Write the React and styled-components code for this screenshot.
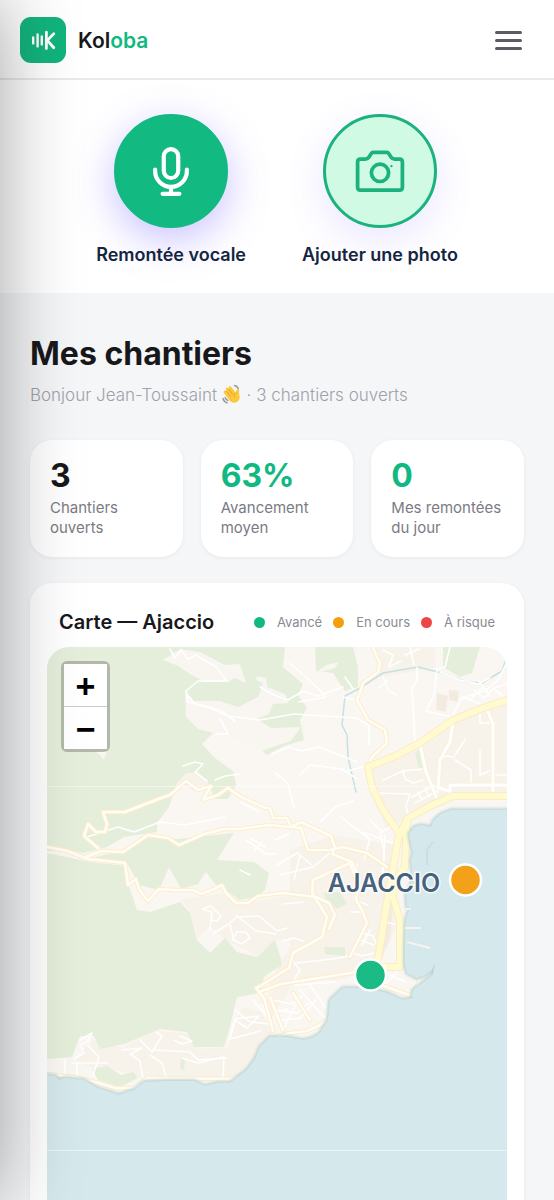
import React from "react";
import styled, { createGlobalStyle } from "styled-components";

const GlobalStyle = createGlobalStyle`
  * {
    box-sizing: border-box;
  }

  body {
    margin: 0;
    background: #f5f6f8;
    font-family: Inter, "Liberation Sans", sans-serif;
    color: #18181b;
  }
`;

const stats = [
  { value: "3", label: "Chantiers ouverts" },
  { value: "63%", label: "Avancement moyen", accent: true },
  { value: "0", label: "Mes remontées du jour", accent: true },
];

const legend = [
  { label: "Avancé", color: "#10b981" },
  { label: "En cours", color: "#f59e0b" },
  { label: "À risque", color: "#ef4444" },
];

const Logo = () => (
  <svg width="46" height="46" viewBox="0 0 46 46" aria-hidden="true">
    <rect width="46" height="46" rx="11" fill="#12b47d" />
    <g stroke="#fff" strokeLinecap="round" strokeWidth="2.4" fill="none">
      <path d="M13.2 20.4v6M17.6 17.4v12M21.8 19.4v8" />
      <path d="M26.4 15.2v16.4" strokeWidth="2.8" />
      <path d="M33.8 16.8l-6.6 6.600 6.600 7.400" strokeLinejoin="round" strokeWidth="2.8" />
    </g>
  </svg>
);

const MicIcon = () => (
  <svg width="56" height="56" viewBox="0 0 24 24" fill="none" stroke="#fff" strokeWidth="1.8" strokeLinecap="round" strokeLinejoin="round" aria-hidden="true">
    <rect x="8.900" y="2.600" width="6.200" height="12.400" rx="3.100" />
    <path d="M5.200 11.400v.6a6.800 6.800 0 0 0 13.600 0v-.6M12 18.800v3M8.400 21.800h7.200" />
  </svg>
);

const CameraIcon = () => (
  <svg width="56" height="56" viewBox="0 0 24 24" fill="none" stroke="#1bb27e" strokeWidth="1.6" strokeLinecap="round" strokeLinejoin="round" aria-hidden="true">
    <path d="M3.600 6.900h2.200c.6 0 1-.2 1.400-.8l1-1.500c.2-.4.6-.6 1-.6h5.600c.4 0 .8.2 1 .6l1 1.500c.4.6.8.8 1.400.8h2.200c.7 0 1.200.5 1.200 1.200v10.900c0 .7-.5 1.200-1.200 1.200H3.600c-.7 0-1.200-.5-1.200-1.200V8.100c0-.7.5-1.200 1.200-1.200z" />
    <circle cx="12" cy="12.800" r="3.700" />
    <circle cx="16.900" cy="9.900" r=".5" fill="#1bb27e" stroke="none" />
  </svg>
);

const WaveIcon = () => (
  <svg width="20" height="20" viewBox="0 0 20 20" role="img" aria-label="Salut">
    <g fill="none" stroke="#9a9aa0" strokeWidth="1.5" strokeLinecap="round">
      <path d="M12.5 1.4q3 .6 3.800 3.400M1 14.500q.8 3.200 4 4.200M3.200 13.500q.5 2 2.600 2.900" />
    </g>
    <path d="M2.200 6.800c.8-.7 1.700-.3 2.300.4L4 5c-.3-1.200 1.500-2 2.300-.8l.6.9-.1-1.700c0-1.300 1.800-1.700 2.500-.5l4.500 6 .6-2.500c.3-1.700 2.800-1.400 2.800.4l-.1 3.200c1.300 3.500.5 6.500-2.200 8-2.600 1.300-5.300.7-7.300-1.500L2 9c-.6-.8-.5-1.700.2-2.200z" fill="#fcc83a" />
    <path d="M4.500 7.200l4 5M6.900 5.100l4 5.200M13.800 8.900c-1.700 1-2 2.300-1.300 4" fill="none" stroke="#e39a22" strokeWidth=".8" strokeLinecap="round" />
  </svg>
);

const COAST =
  "M47 1075l8 1 4 4 6-2 19 2 13 8 10 3 12 4 8-3 7-2 10-8 25-1 25 0 11 5 12-3 13 0 17-13 8-11 5-12 10-10 17 0 10 2 6 1 9-2 8-5 8-13 2-20 13-12 24 0 20 5 16 7 9-2 1-8 20-15 2-13-3 8-7 5-8 3-10-5-2-8v-22l1-23 2-8 4-4-5-1-1-14 7-13-2-20 2-7-4-19 5-7 7-2 10 2 3-7 7-6 10-4 57 0v450H47z";

const GREENS = [
  "M47 647h238l-2 20 20 17-5 11 9 13-7 12 4 20-20 6-17 9-23-21-30-2-12 12 13 14 18 13 3 14-8 14-14 0-4-14-12-13-12 1-9 10-8 24-12 16v9l-33 5-17 10-23 6-20-3-17 1z",
  "M90 858l37-8 20-13 23 3 27-3 37-4-17 27 37 2 15 11-4 17-8 7-18 3-17-13-7-3-9-12-8 12-17 5-12-22-10 23-20-5-12-22z",
  "M47 853l43 9 37 4v14l10 30 13 2 30-10 10 11 7 27 13 13 15-15 12 14 20 5 18-17 7 23-18 14-4 16-23 4-8 33-5 17h-30l-7-15-27-3-36 15-24 5-6-13-14 0-8 21-25 2z",
  "M315 647h38l5 20v20l-13 4-12-18-17-2z",
  "M443 647h37l-8 26-12 4-17-10z",
  "M92 1069l15-3 14 9 12-3 5 6-18 9-22-7z",
  "M270 942l9 14 2 10-11 6z",
  "M324 892h16l7 12-10 5-11-8z",
  "M324 947h21v9l-20-2z",
  "M415 753l5-4 3 19h-4z",
  "M181 1057l4 1-1 12-4-1z",
];

const CLEARINGS = [
  "M163 660l17-11 20 3 25 13 15-1 6 19-11-5-7 4h-23l-15-8-12-8z",
  "M185 692l8 9 27 0 18 6 20-10 5-14-7-3 1-4 9 2 1 9 18 7 4 9-16 1-4 10-12 5 14 9 30-1-10 14-30 10-20-10-20-6-23-6-12-12z",
  "M318 671l8-6 13-3-4 6-14 4z",
  "M96 752l11-1-3 9-4-5z",
];

// busier built-up blocks, a shade darker than the open land
const BLOCKS = [
  "M368 770l52-27 33-22 54-18v95h-57l-44 20-20 12z",
  "M290 850l45-15 60 10 2 80-20 45-40 10-42 0-25 40 0-38 20-35z",
  "M180 900l40-6 30 8 40-6 20 5 3 36-36 3-20 15-30-14-17-15-12 12-10-30z",
  "M75 1060l18-20 30 8 30-17 35 2 10 16 30-2 14-40 20 5 10 22-25 40-40 8-60-2-30-10-25-2z",
  "M170 785l18-28 22 6 4 20-20 8-14-8z",
  "M375 647h60v20l-25 5-30 5z",
];

const PLOTS = [
  "M437 693l11 3-2 16-10-2z",
  "M449 690l10 1-1 11-9-2z",
  "M384 897l10 0-4 40-8 20z",
];

const LANES = [
  "M170 649l5 9 6-8 7 9 8-4 20 12 11 14-29 0-12 10 2 11 20 5 20 9 32 4 34-6 62 4 13 7v20",
  "M187 694l8 10 25 6 15 11 M220 719l8 15-12 0 M260 687l14 8 14 5 15-9 15 5 25-9",
  "M290 663l28 25 8 9-27 5 M345 677l8 12M355 700l-12-3",
  "M84 838l34-11 16 5 26-10 25 3 40-8 M183 766l12-4 8 2 -8 8 12 9",
  "M210 930l2-18-10-3 9-3 10 10-4 5-6-1 M214 933l13-8 10-8 22-1 18 15 10 -3 M230 925l4 15 7 4 9-6-4-6-9 0-5 8 M236 915l20 16 20 3",
  "M80 1040l12-7-4 8-8 4 4 8-10 6M88 1045l11 12-6 18M72 1063h36M65 1060v14M77 1062v12 M122 1050l20-2-12 6 10 7 3 17 M140 1040l12 12 10-16-6-4 M155 1050l35 2 8 8 28-2 M150 1055l12 8 4 14 20 1 M182 1058l16 5 12-3 14-3-1 20 M180 1036l12 5-10 3-8-4 M235 1020l12 8 12-12-24 3-5 20 30-8 M235 1010l15 12 20 2",
  "M262 1005l10 20M275 1012l13-3M253 1000l15 18",
  "M417 667v13l-5 8 3 55 M450 647l-5 20 -8 2-3 26-8 16 26 6 9-18 25-9 12-10 9-18 M440 672l20 8 18 4 12-6",
  "M474 690l10 8 10-10 13 -4M470 700l12-12M463 697l20 8 M478 680l12 16 M480 710v13l15 0 M495 690l8 6",
  "M377 793l33 1-4 12 3 12M383 780l20-9 22-2M403 771l2 8 8 4 10-3 M412 797l22-12 4 8M415 803l23-12M418 792l4 8M425 788l4 9 M455 760l16 10v15M480 750v25l15 -6M465 740l-10 15 M490 775h17 M440 760l6-4 8 1",
  "M383 677l6 14 7 4M388 680l-10 8 M383 650l10 5-4 12 12-6 M410 647l4 18 M405 655l14-6",
  "M275 773l5 4M278 774l10 10 6 24 M300 775l10-10 32 4 15 10M272 754l17-7 12 4 18-4 38 15 M345 772l20-6 5-8",
  "M320 822l15-15 18-6M340 816l10 8 20 15-6 20 M365 833l28 10M380 833l4 18-2 25 M385 835l-2 45 M370 820l12 12 10-6",
  "M275 840l14-6M277 865l20-12 15 12 M280 875l33-8 18-15 M300 855l-6 25 M335 855l22 10 0 14 M283 904l20-2M283 941l11-3 9 3 M292 960l8 10-6 10 M297 963l35-4 18-3",
  "M357 880l-3 20 14 5 M362 912h-11M361 933l12 3 4 10M360 940l14 5M370 930l-8 15M352 953l10 3 12-3 M395 955l12-16 M385 985l16-18M380 980l14 10M390 975l14 6 M382 922l13 2",
  "M273 1000l19 4 10-8 M275 1010l22 3 12-10M278 1021l22-3 16-18M283 1030l15-30M300 990l25 28M310 985l15 22M295 985l40-3",
  "M250 838l15 9M246 840l20 14 10 0M262 842l-8 9M240 870l10 5 M240 802l20 10 M215 780l10 -4 14 -2",
];

// white town streets, drawn wider than the lanes
const AVENUES = [
  "M420 744l6 28 10 25",
  "M453 722l-3 20-10 18-2 28 12 3v8",
  "M450 799v-14h57",
  "M487 709l6 15v74",
];

const STREETS = [
  "M373 647l3 8 4 8-2 9-15 11-2 7-4 10 11 20 17 10 2 13-15 14-5 11",
  "M47 847l20 4 21 8 37 4 3 22 8-6 3 10 9 12 11-12 16 1 18 0 8 4 13-5 8-4 4 8 10 10 12 0 10-7 25-3 33 4 13 6 6 12-6 14",
  "M86 857l15-6 22 1 25-17 20 3 11 7 25-11 20-5 15 0 30-4 32 3 7 22 22 0 13-3 24 6 20 14",
  "M98 848l-14-12 4-12 8 8 9 0 2-8-4-12 22 0 36-14 9-3 16-14 12 9 13-4-8 14 15-5 10-7 13 9 25 11 4 0 3 10 14 0 4 9 10-5 30 14 4 12-3 6 20 8 6 14",
  "M350 863l-37 17-1 13 15 24-5 20-29 16-4 15-29 18-4 2 8 10 9 33",
  "M350 863l8 22-2 15 6 10 5 13-17 34",
  "M262 996l-3-4 22-8 76-12 20-3",
  "M293 993l17 27",
  "M270 997l13 33",
  "M47 1074l25 3 23 5 20 6 20 0 12-10 83 1 17-4 10-10 12-20 8-8 13-4 17-2 17-8 23-26 17-11h20l28 10 8-15-13-23 4-20 6-10",
];

const HIGHWAYS = [
  "M507 700l-24 8-30 12-33 23-27 14-25 10",
  "M368 767l4 20 11 23 16 23",
  "M507 796h-54l-23 10-23 13-9 20-5 30-6 33-9 57",
  "M407 822l-2 45-10 15-2 15 7 23v47h-17",
];

const AjaccioMap = () => (
  <svg width="100%" viewBox="47 647 460 630" aria-hidden="true">
    <defs>
      <filter id="shore" x="-5%" y="-5%" width="110%" height="110%">
        <feGaussianBlur stdDeviation="1.5" />
      </filter>
    </defs>
    <rect x="47" y="647" width="460" height="640" fill="#faf7f2" />
    {BLOCKS.map((d) => <path key={d} d={d} fill="#f7f2ea" />)}
    {PLOTS.map((d) => <path key={d} d={d} fill="#f4ebe0" />)}
    {GREENS.map((d) => <path key={d} d={d} fill="#e4eeda" />)}
    {CLEARINGS.map((d) => <path key={d} d={d} fill="#f9f5f0" />)}
    <g fill="none" strokeLinejoin="round" strokeLinecap="round">
      <path d="M505 662l-3 9-10 6-10 6-15-1-25-9-24-6-35 6-23 15-15 8-3 29 5 10 1 22 8 35" stroke="#c5e1e3" strokeWidth="1.5" />
      {LANES.map((d) => <path key={d} d={d} stroke="#fff" strokeWidth="1.6" />)}
      {AVENUES.map((d) => <path key={d} d={d} stroke="#fbefd6" strokeWidth="4.6" />)}
      {AVENUES.map((d) => <path key={d} d={d} stroke="#fff" strokeWidth="3" />)}
      {STREETS.map((d) => <path key={d} d={d} stroke="#fdedc9" strokeWidth="4.6" />)}
      {STREETS.map((d) => <path key={d} d={d} stroke="#fffdf8" strokeWidth="2.600" />)}
      {HIGHWAYS.map((d) => <path key={d} d={d} stroke="#fbecc6" strokeWidth="8" />)}
      {HIGHWAYS.map((d) => <path key={d} d={d} stroke="#fffad0" strokeWidth="6" />)}
    </g>
    <path d={COAST} fill="none" stroke="#b3ced2" strokeWidth="3" filter="url(#shore)" />
    <path d={COAST} fill="#d5e8eb" />
    <path d="M405 928h16M407 942l23 6M406 909h5" stroke="#f7f3ef" strokeWidth="2" />
    <path d="M427 865v-15l6-8" fill="none" stroke="#c9dfe3" strokeWidth="2" />
    <path d="M47 786.5h460M47 1150.5h460" stroke="#fff" strokeOpacity=".5" />
    <MapLabel x="384" y="892">AJACCIO</MapLabel>
    <circle cx="465.5" cy="880" r="15.5" fill="#f4a11a" stroke="#fff" strokeWidth="2.5" />
    <circle cx="370.5" cy="975" r="15.5" fill="#1bbb85" stroke="#fff" strokeWidth="2.5" />
  </svg>
);

const App = () => {
  return (
    <>
      <GlobalStyle />
      <Header>
        <Brand href="#">
          <Logo />
          <span>
            Kol<Accent>oba</Accent>
          </span>
        </Brand>
        <MenuButton type="button" aria-label="Menu">
          <MenuBar />
          <MenuBar />
          <MenuBar />
        </MenuButton>
      </Header>

      <Actions>
        <Action type="button">
          <Circle $filled>
            <MicIcon />
          </Circle>
          Remontée vocale
        </Action>
        <Action type="button">
          <Circle>
            <CameraIcon />
          </Circle>
          Ajouter une photo
        </Action>
      </Actions>

      <Main>
        <Title>Mes chantiers</Title>
        <Greeting>
          Bonjour Jean-Toussaint <WaveIcon /> · 3 chantiers ouverts
        </Greeting>

        <Stats>
          {stats.map(({ value, label, accent }) => (
            <StatCard key={label}>
              <StatValue $accent={accent}>{value}</StatValue>
              <StatLabel>{label}</StatLabel>
            </StatCard>
          ))}
        </Stats>

        <MapCard>
          <MapHeader>
            <MapTitle>Carte — Ajaccio</MapTitle>
            <Legend>
              {legend.map(({ label, color }) => (
                <LegendItem key={label} $color={color}>
                  {label}
                </LegendItem>
              ))}
            </Legend>
          </MapHeader>
          <MapFrame>
            <AjaccioMap />
            <ZoomControl>
              <ZoomButton type="button" aria-label="Zoomer">
                +
              </ZoomButton>
              <ZoomButton type="button" aria-label="Dézoomer">
                −
              </ZoomButton>
            </ZoomControl>
          </MapFrame>
        </MapCard>
      </Main>
      <Drawer aria-hidden="true" />
    </>
  );
};

export default App;

const Header = styled.header`
  display: flex;
  align-items: center;
  justify-content: space-between;
  height: 80px;
  padding: 2px 32px 0 20px;
  background: #fff;
  border-bottom: 2px solid #e6eaee;
`;

const Brand = styled.a`
  display: flex;
  align-items: center;
  gap: 12px;
  color: #18181b;
  font-size: 21px;
  font-weight: 600;
  text-decoration: none;
`;

const Accent = styled.span`
  color: #10b981;
`;

const MenuButton = styled.button`
  display: flex;
  flex-direction: column;
  gap: 5px;
  padding: 0;
  border: 0;
  background: none;
`;

const MenuBar = styled.span`
  width: 27px;
  height: 3px;
  border-radius: 2px;
  background: #5b5b64;
`;

const Actions = styled.section`
  display: flex;
  justify-content: center;
  gap: 56px;
  padding: 34px 20px 26px;
  background: #fff;
`;

const Action = styled.button`
  display: flex;
  flex-direction: column;
  align-items: center;
  gap: 15px;
  padding: 0;
  border: 0;
  background: none;
  color: #14253f;
  font-family: inherit;
  font-size: 18px;
  font-weight: 600;
  line-height: 24px;
`;

const Circle = styled.span`
  display: flex;
  align-items: center;
  justify-content: center;
  width: 114px;
  height: 114px;
  border: 3px solid ${(props) => (props.$filled ? "#12b981" : "#1bb27e")};
  border-radius: 50%;
  background: ${(props) => (props.$filled ? "#12b981" : "#d1fae5")};
  box-shadow: 0 12px 40px
    ${(props) => (props.$filled ? "rgba(99, 80, 255, 0.35)" : "rgba(99, 80, 255, 0.14)")};
`;

const Main = styled.main`
  padding: 40px 30px;
`;

const Title = styled.h1`
  margin: 0;
  font-size: 32px;
  font-weight: 700;
  line-height: 42px;
`;

const Greeting = styled.p`
  margin: 8px 0 0;
  color: #a1a1aa;
  font-size: 17px;
  font-weight: 300;
  line-height: 24px;

  svg {
    vertical-align: -3px;
  }
`;

const Stats = styled.section`
  display: grid;
  grid-template-columns: repeat(3, 1fr);
  gap: 18px;
  margin-top: 33px;
`;

const StatCard = styled.div`
  padding: 18px 20px 19px;
  border-radius: 22px;
  background: #fff;
  box-shadow: 0 1px 4px rgba(24, 24, 27, 0.06);
`;

const StatValue = styled.div`
  color: ${(props) => (props.$accent ? "#10b981" : "#18181b")};
  font-size: 32px;
  font-weight: 700;
  line-height: 36px;
`;

const StatLabel = styled.div`
  margin-top: 4px;
  color: #7b7b84;
  font-size: 15px;
  line-height: 20px;
`;

const MapCard = styled.section`
  margin-top: 26px;
  padding: 18px 17px;
  border-radius: 22px;
  background: #fff;
  box-shadow: 0 1px 4px rgba(24, 24, 27, 0.06);
`;

const MapHeader = styled.div`
  display: flex;
  align-items: center;
  justify-content: space-between;
  padding: 8px 12px 12px;
`;

const MapTitle = styled.h2`
  margin: 0;
  font-size: 20px;
  font-weight: 600;
  line-height: 26px;
  white-space: nowrap;
`;

const Legend = styled.ul`
  display: flex;
  gap: 11px;
  margin: 0;
  padding: 0;
  list-style: none;
`;

const LegendItem = styled.li`
  display: flex;
  align-items: center;
  gap: 12px;
  color: #8a8a93;
  font-size: 13px;
  white-space: nowrap;

  &::before {
    content: "";
    width: 11px;
    height: 11px;
    border-radius: 50%;
    background: ${(props) => props.$color};
  }
`;

const MapFrame = styled.div`
  position: relative;
  overflow: hidden;
  border-radius: 22px;

  > svg {
    display: block;
  }
`;

const MapLabel = styled.text`
  fill: #47627f;
  stroke: #fff;
  stroke-opacity: 0.8;
  stroke-width: 3px;
  paint-order: stroke;
  font-size: 25px;
  font-weight: 600;
  text-anchor: middle;
`;

const ZoomControl = styled.div`
  position: absolute;
  top: 14px;
  left: 14px;
  border: 3px solid rgba(0, 0, 0, 0.22);
  border-radius: 6px;
  background-clip: padding-box;
`;

const ZoomButton = styled.button`
  display: block;
  width: 43px;
  height: 42px;
  padding: 8px 0 0;
  border: 0;
  background: #fff;
  color: #000;
  font: bold 34px/34px "Liberation Mono", monospace;

  & + & {
    height: 43px;
    border-top: 1px solid #ccc;
  }
`;

// closed side menu, parked off screen: only its shadow reaches the page
const Drawer = styled.aside`
  position: fixed;
  top: 0;
  bottom: 0;
  left: -300px;
  width: 300px;
  box-shadow: 0 0 72px rgba(24, 24, 27, 0.4);
  pointer-events: none;
`;
